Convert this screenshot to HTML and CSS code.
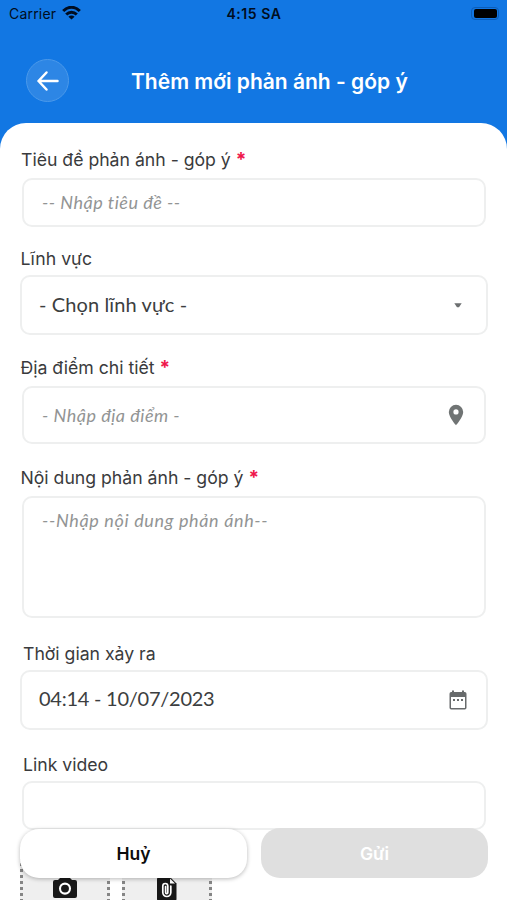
FILE: index.html
```html
<!DOCTYPE html>
<html lang="vi">
<head>
<meta charset="utf-8">
<title>Thêm mới phản ánh - góp ý</title>
<link rel="stylesheet" href="styles.css">
</head>
<body>
<div class="screen">
  <div class="status">
    <div class="carrier">Carrier
      <svg width="19" height="14" viewBox="0 0 19 14" fill="none" stroke="#000d20" stroke-width="2.9"><path d="M1.2 5.1C6-.1 13-.1 17.800 5.100M4.200 8.600c3.100-3.200 7.500-3.200 10.600 0"/><path d="M9.500 13.600 6.400 10.700c1.700-1.700 4.500-1.700 6.200 0z" fill="#000d20" stroke="none"/></svg>
    </div>
    <div class="time">4:15 SA</div>
    <div class="battery"><i></i></div>
  </div>
  <header class="header">
    <div class="back"><svg width="24" height="22" viewBox="0 0 24 22" fill="none" stroke="#fff" stroke-width="2.5" stroke-linecap="round" stroke-linejoin="round"><path d="M21.500 11H2.500M10.500 2.500 2.500 11l8 8.500"/></svg></div>
    <h1>Thêm mới phản ánh - góp ý</h1>
  </header>
  <main class="sheet">
    <label class="label first">Tiêu đề phản ánh - góp ý <b>*</b></label>
    <div class="box short"><span class="hint">-- Nhập tiêu đề --</span></div>
    <label class="label area">Lĩnh vực</label>
    <div class="box wide"><span class="value choose">- Chọn lĩnh vực -</span><svg class="caret" width="8" height="5" viewBox="0 0 8 5"><path d="M.3.300h7.400L5 4.200H3z" fill="#6c6f70"/></svg></div>
    <label class="label place">Địa điểm chi tiết <b>*</b></label>
    <div class="box medium"><span class="hint">- Nhập địa điểm -</span><svg class="pin" width="16" height="22" viewBox="0 0 16 22"><path fill="#707474" fill-rule="evenodd" d="M8 .8A7.200 7.200 0 0 0 .8 8C.8 13.300 8 21.200 8 21.200S15.200 13.300 15.200 8A7.200 7.200 0 0 0 8 .8zm0 4.500a2.600 2.600 0 1 1 0 5.200 2.600 2.600 0 0 1 0-5.200z"/></svg></div>
    <label class="label content">Nội dung phản ánh - góp ý <b>*</b></label>
    <div class="box tall"><span class="hint long">--Nhập nội dung phản ánh--</span></div>
    <label class="label when">Thời gian xảy ra</label>
    <div class="box wide"><span class="value date">04:14 - 10/07/2023</span><svg class="cal" width="18" height="20" viewBox="0 0 18 20"><path fill="#686b6c" fill-rule="evenodd" d="M3 .5h2V2h8V.5h2V2h.8Q17.500 2 17.500 3.800V17.700Q17.500 19.500 15.800 19.500H2.200Q.5 19.500.5 17.700V3.800Q.5 2 2.200 2H3zM2 7v10.400q0 .6.600.6h12.800q.6 0 .6-.6V7z"/><path fill="#686b6c" d="M4 9h2v2H4zM8 9h2v2H8zM12 9h2v2h-2z"/></svg></div>
    <label class="label link">Link video</label>
    <div class="box short"></div>
    <div class="tiles">
      <div class="tile"><svg width="26" height="22" viewBox="0 0 26 22"><path fill="#181818" d="M8 1h10l2 2h3q2 0 2 2v14q0 2-2 2H3q-2 0-2-2V5q0-2 2-2h3z"/><circle cx="13" cy="11.600" r="5" fill="none" stroke="#fff" stroke-width="2.100"/></svg></div>
      <div class="tile"><svg width="20" height="24" viewBox="0 0 20 24"><path fill="#181818" d="M2 0h11l6.500 6.500V22q0 2-2 2H2q-2 0-2-2V2Q0 0 2 0z"/><path d="M13 1.500V6.500h5z" fill="#fff"/><path fill="none" stroke="#fff" stroke-width="1.700" stroke-linecap="round" d="M13.800 9v6.500a4 4 0 0 1-8 0V9a2.500 2.500 0 0 1 5 0v6.500a1 1 0 0 1-2.200 0V9.500"/></svg></div>
    </div>
  </main>
  <footer class="actions"><div class="btn cancel">Huỷ</div><div class="btn send">Gửi</div></footer>
</div>
</body>
</html>
```

FILE: styles.css
```css
* { box-sizing: border-box; }
body { margin: 0; background: #fff; overflow: hidden; font-family: Inter, sans-serif; }
svg { display: block; flex: none; }
.screen { position: relative; width: 507px; height: 900px; overflow: hidden; background: linear-gradient(#1277e3 0, #1277e3 170px, #fff 170px); }
.status { height: 28px; display: grid; grid-template-columns: 1fr auto 1fr; align-items: center; padding: 0 8px 2px 9px; color: #000d20; }
.carrier { display: flex; align-items: center; gap: 6px; font-size: 14px; letter-spacing: .2px; }
.time { font-size: 14px; font-weight: 600; letter-spacing: .55px; }
.battery { justify-self: end; width: 28px; height: 13px; padding: 1px; border: 1px solid #0d5db7; border-radius: 4px; }
.battery i { display: block; height: 9px; width: 23px; margin-left: 1px; background: #000; border-radius: 2px; }
.header { height: 95px; display: flex; align-items: center; padding: 8px 0 0 26px; gap: 62px; color: #fff; }
.back { width: 43px; height: 43px; border-radius: 50%; border: 1px solid #4b99ea; background: #2d86e5; display: flex; align-items: center; justify-content: center; margin-top: 2px; }
h1 { margin: 4px 0 0; font-size: 21px; line-height: 28px; font-weight: 600; white-space: nowrap; }
.sheet { height: 777px; background: #fff; border-radius: 26px 26px 0 0; padding: 25px 19px 0 20px; overflow: hidden; }
.label { display: block; height: 24px; line-height: 24px; font-size: 17.650px; color: #3a3b3d; margin-left: 1px; white-space: nowrap; }
.label b { color: #ef174b; font-weight: 700; font-size: 19px; line-height: 20px; }
.first { margin-bottom: 6px; }
.area { margin: 20px 0 4px .5px; }
.place { margin: 21px 0 6px .5px; }
.content { margin: 22px 0 6px .5px; }
.when { margin: 24px 0 4px 3px; }
.link { margin: 23px 0 4px 3px; }
.box { border: 2px solid #eeefef; border-radius: 10px; display: flex; align-items: center; justify-content: space-between; margin: 0 2px; padding: 0 20px 0 18px; background: #fff; }
.short { height: 49px; }
.short .hint { margin-top: -1px; }
.wide { height: 60px; margin: 0; padding-left: 17px; padding-right: 19px; }
.medium { height: 58px; }
.tall { height: 122px; align-items: flex-start; padding-top: 9px; }
.hint, .value { font-family: Lato, sans-serif; white-space: nowrap; }
.hint { font-style: italic; font-size: 18px; line-height: 26px; letter-spacing: .5px; color: #929494; }
.long { letter-spacing: .65px; }
.value { font-size: 20px; line-height: 28px; color: #3c3e40; }
.choose { letter-spacing: .12px; margin-top: -3px; }
.date { letter-spacing: -.25px; margin-top: -4px; }
.caret { margin-right: 5px; }
.tiles { display: flex; gap: 12px; margin-top: 26px; }
.tile { width: 90px; height: 90px; background: #efefef; border: 3px dotted #858585; display: flex; justify-content: center; align-items: flex-start; padding-top: 18px; }
.actions { position: absolute; left: 20px; top: 829px; width: 468px; display: flex; gap: 14px; }
.btn { flex: 1; height: 49px; border-radius: 19px; display: flex; align-items: center; justify-content: center; font-size: 17.500px; font-weight: 600; }
.cancel { background: #fff; color: #0c0c0c; box-shadow: 0 1px 4px rgba(0,0,0,.28); }
.send { background: #dfdfdf; color: #fff; margin-top: -1px; height: 50px; }
```
